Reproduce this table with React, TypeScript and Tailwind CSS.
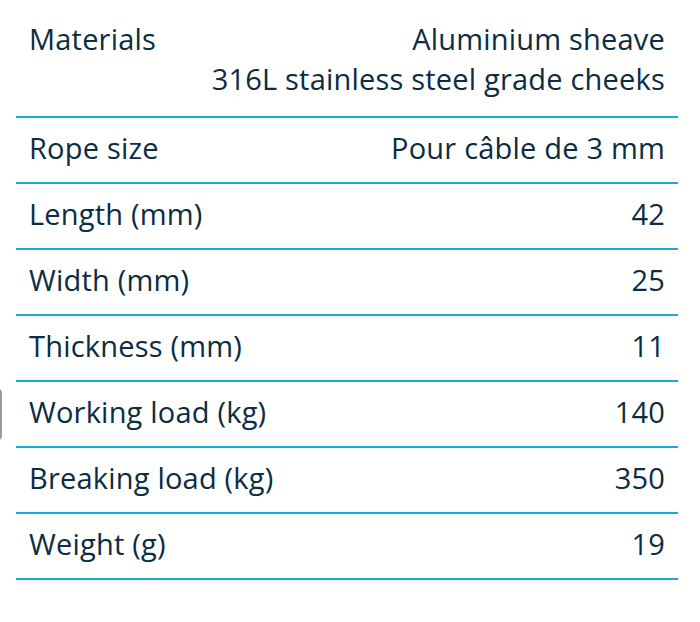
const rows: { label: string; value: string }[] = [
  { label: 'Rope size', value: 'Pour câble de 3 mm' },
  { label: 'Length (mm)', value: '42' },
  { label: 'Width (mm)', value: '25' },
  { label: 'Thickness (mm)', value: '11' },
  { label: 'Working load (kg)', value: '140' },
  { label: 'Breaking load (kg)', value: '350' },
  { label: 'Weight (g)', value: '19' },
];

export default function App() {
  return (
    <div className="relative min-h-[622px] w-[700px] bg-white text-[#0b2c41] font-['Open_Sans','Noto_Sans',sans-serif] text-[29px] leading-[40px] tracking-[0.2px]">
      {/* edge of a panel that sits off to the left */}
      <div className="absolute left-[-20px] top-[389px] h-[51px] w-[22px] rounded-r-[4px] border-2 border-[#9a9a9a]" />

      <div className="ml-[16px] w-[662px]">
        <div className="flex justify-between border-b-2 border-[#1aabd2] px-[13px] pt-[19px] pb-[17px]">
          <span>Materials</span>
          <div className="text-right">
            <div>Aluminium sheave</div>
            <div>316L stainless steel grade cheeks</div>
          </div>
        </div>

        {rows.map((row) => (
          <div
            key={row.label}
            className="flex justify-between border-b-2 border-[#1aabd2] px-[13px] pt-[10px] pb-[14px]"
          >
            <span>{row.label}</span>
            <span className="text-right">{row.value}</span>
          </div>
        ))}
      </div>
    </div>
  );
}
